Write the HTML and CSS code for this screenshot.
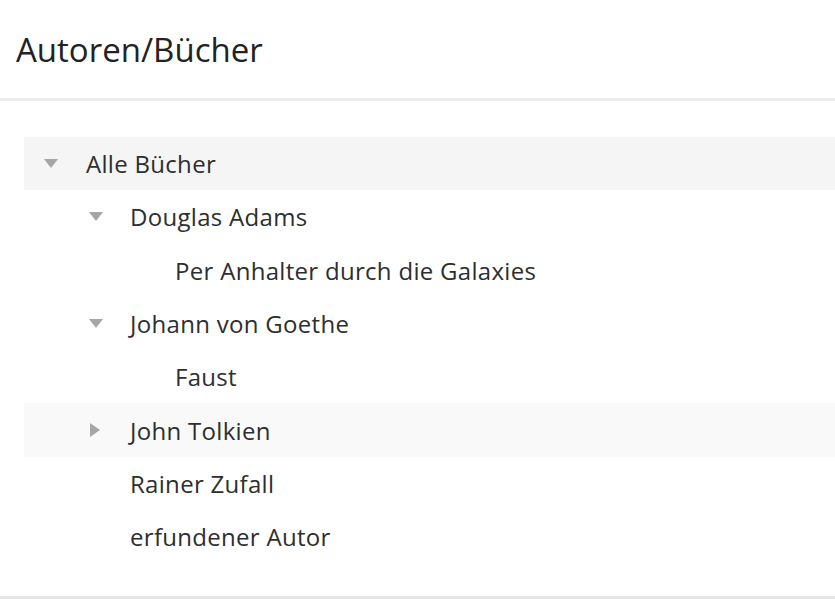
FILE: index.html
```html
<!DOCTYPE html>
<html lang="de">
<head>
<meta charset="utf-8">
<link rel="stylesheet" href="styles.css">
</head>
<body>
<div class="panel">
  <header class="header"><h1 class="title">Autoren/Bücher</h1></header>
  <ul class="tree">
    <li class="row selected lvl0"><span class="tw down"></span><span class="label">Alle Bücher</span></li>
    <li class="row lvl1"><span class="tw down"></span><span class="label">Douglas Adams</span></li>
    <li class="row lvl2"><span class="tw none"></span><span class="label">Per Anhalter durch die Galaxies</span></li>
    <li class="row lvl1"><span class="tw down"></span><span class="label">Johann von Goethe</span></li>
    <li class="row lvl2"><span class="tw none"></span><span class="label">Faust</span></li>
    <li class="row hover lvl1"><span class="tw right"></span><span class="label">John Tolkien</span></li>
    <li class="row lvl1"><span class="tw none"></span><span class="label">Rainer Zufall</span></li>
    <li class="row lvl1"><span class="tw none"></span><span class="label">erfundener Autor</span></li>
  </ul>
  <div class="spacer"></div>
</div>
</body>
</html>
```
FILE: styles.css
```css
html, body { margin: 0; padding: 0; background: #fff; }
body { font-family: "Open Sans", "Noto Sans", sans-serif; color: #333; }
.panel { width: 835px; height: 599px; display: flex; flex-direction: column; box-sizing: border-box; border-bottom: 3px solid #e6e6e6; }
.header { height: 98px; border-bottom: 3px solid #ececec; display: flex; align-items: center; padding-left: 16px; }
.title { margin: 0; font-weight: 400; font-size: 33px; color: #222; letter-spacing: 0; }
.tree { list-style: none; margin: 36px 0 0 24px; padding: 0; }
.row { height: 53.3px; display: flex; align-items: center; font-size: 24px; letter-spacing: 0.3px; color: #2e2e2e; }
.row.selected { background: #f5f5f5; }
.row.hover { background: #f9f9f9; }
.lvl0 { padding-left: 19px; }
.lvl1 { padding-left: 64px; }
.lvl2 { padding-left: 109px; }
.tw { width: 16px; margin-right: 27px; display: flex; justify-content: center; align-items: center; height: 16px; }
.tw.down::before { content: ""; border-left: 7px solid transparent; border-right: 7px solid transparent; border-top: 9px solid #a6a6a6; }
.tw.right::before { content: ""; border-top: 7px solid transparent; border-bottom: 7px solid transparent; border-left: 10px solid #a6a6a6; margin-left: -2px; }
.lvl1 .tw, .lvl2 .tw { margin-right: 26px; }
.spacer { flex: 1; }
```
